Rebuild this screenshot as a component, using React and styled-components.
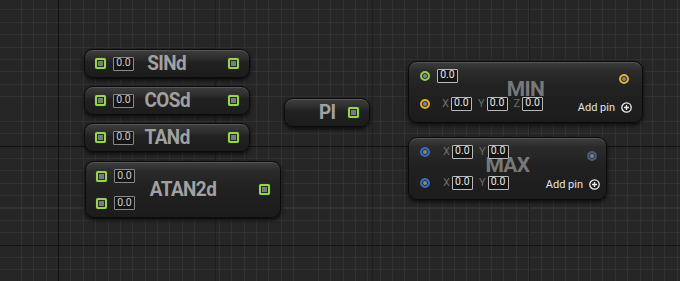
import React from "react";
import styled, { createGlobalStyle } from "styled-components";

const Global = createGlobalStyle`
  html, body { margin: 0; padding: 0; background: #262626; }
  body { font-family: Roboto, "Liberation Sans", sans-serif; }
`;

const Canvas = styled.div`
  position: relative;
  width: 680px;
  height: 281px;
  overflow: hidden;
  background-color: #262626;
  background-image:
    linear-gradient(to right, transparent 0 58px, #121212 58px 59px, transparent 59px),
    linear-gradient(to bottom, transparent 0 146px, #121212 146px 147px, transparent 147px 245px, #151515 245px 246px, transparent 246px),
    repeating-linear-gradient(to right, transparent 0 58px, #1f1f1f 58px 59px, transparent 59px 157px),
    repeating-linear-gradient(to right, transparent 0 8.5px, #313131 8.5px 9.5px, transparent 9.5px 12.375px),
    repeating-linear-gradient(to bottom, transparent 0 9.5px, #313131 9.5px 10.5px, transparent 10.5px 12.375px);
`;

const NodeBase = styled.div`
  position: absolute;
  left: ${(p) => p.$x}px;
  top: ${(p) => p.$y}px;
  width: ${(p) => p.$w}px;
  height: ${(p) => p.$h}px;
  box-sizing: border-box;
  border-radius: ${(p) => p.$r || 9}px;
  border: 1px solid #0b0b0b;
  background: linear-gradient(to bottom, #3e3e3e 0, #2b2b2b 9px, #212121 45%, #1c1c1c 100%);
  box-shadow: inset 0 1px 0 rgba(255, 255, 255, 0.13), 0 2px 4px rgba(0, 0, 0, 0.75);
`;

const SimpleNode = styled(NodeBase)`
  display: grid;
  grid-template-columns: 1fr auto 1fr;
  align-items: center;
  padding: 0 10px;
`;

const LeftGroup = styled.div`
  display: flex;
  flex-direction: column;
  gap: ${(p) => p.$gap || 0}px;
  justify-self: start;
`;

const Row = styled.div`
  display: flex;
  align-items: center;
  height: 15px;
`;

const Title = styled.div`
  font-family: Roboto, "Liberation Sans", sans-serif;
  font-weight: 700;
  font-size: 21px;
  line-height: 1;
  color: #a1a1a1;
  letter-spacing: -0.6px;
  transform: scaleX(0.9);
  white-space: nowrap;
`;

const RightSlot = styled.div`
  justify-self: end;
  display: flex;
  align-items: center;
`;

const SquarePin = styled.span`
  display: inline-block;
  width: 11px;
  height: 11px;
  box-sizing: border-box;
  border: 2px solid #92d84c;
  border-radius: 2px;
  background: #7b7b7b;
  box-shadow: inset 0 0 0 1px #2a2a2a, 0 0 1px rgba(146, 216, 76, 0.5);
  flex: none;
`;

const pinColors = {
  green: "#8ed14d",
  yellow: "#e0ad2c",
  blue: "#2f6cc4",
  steel: "#3f5f86",
};

const CirclePin = styled.span`
  display: inline-block;
  width: 10px;
  height: 10px;
  box-sizing: border-box;
  border-radius: 50%;
  border: 2px solid ${(p) => pinColors[p.$c]};
  background: #868686;
  box-shadow: inset 0 0 0 1px #2a2a2a;
  flex: none;
`;

const ValueBox = styled.span`
  display: inline-flex;
  align-items: center;
  justify-content: center;
  width: 21px;
  height: 14px;
  box-sizing: border-box;
  border: 1px solid ${(p) => (p.$bright ? "#b9b9b9" : "#8a8a8a")};
  border-radius: 1px;
  background: #141414;
  color: ${(p) => (p.$bright ? "#e8e8e8" : "#cfcfcf")};
  font-family: Roboto, "Liberation Sans", sans-serif;
  font-size: 10.5px;
  line-height: 1;
  margin-left: ${(p) => p.$ml ?? 7}px;
`;

const Axis = styled.span`
  font-family: Roboto, "Liberation Sans", sans-serif;
  font-size: 11px;
  color: #6c6c6c;
  margin-left: ${(p) => p.$ml || 6}px;
  line-height: 1;
`;

const BigNode = styled(NodeBase)`
  display: flex;
  justify-content: space-between;
  padding: 0 ${(p) => p.$pr}px 0 11px;
`;

const BigTitle = styled.div`
  position: absolute;
  left: 0;
  right: 0;
  top: 17px;
  text-align: center;
  font-family: Roboto, "Liberation Sans", sans-serif;
  font-weight: 700;
  font-size: 21px;
  line-height: 1;
  color: rgba(150, 150, 150, 0.75);
  letter-spacing: -0.6px;
  pointer-events: none;
`;

const PinColumn = styled.div`
  position: relative;
  display: flex;
  flex-direction: column;
  padding-top: ${(p) => p.$pt}px;
  gap: ${(p) => p.$gap}px;
`;

const OutColumn = styled.div`
  position: relative;
  display: flex;
  flex-direction: column;
  align-items: flex-end;
  padding-top: ${(p) => p.$pt}px;
  gap: ${(p) => p.$gap}px;
`;

const OutPinWrap = styled.div`
  height: 10px;
  margin-right: 3px;
  display: flex;
`;

const AddPin = styled.div`
  display: flex;
  align-items: center;
  gap: 6px;
  height: 12px;
  font-family: Roboto, "Liberation Sans", sans-serif;
  font-size: 11px;
  color: #e4e4e4;
`;

const PlusIcon = () => (
  <svg width="11" height="11" viewBox="0 0 11 11" fill="none">
    <circle cx="5.5" cy="5.5" r="4.7" stroke="#f0f0f0" strokeWidth="1.3" />
    <path d="M5.5 3v5M3 5.5h5" stroke="#f0f0f0" strokeWidth="1.3" />
  </svg>
);

const Simple = ({ x, y, w, title }) => (
  <SimpleNode $x={x} $y={y} $w={w} $h={29}>
    <LeftGroup>
      <Row>
        <SquarePin />
        <ValueBox>0.0</ValueBox>
      </Row>
    </LeftGroup>
    <Title>{title}</Title>
    <RightSlot>
      <SquarePin />
    </RightSlot>
  </SimpleNode>
);

export default function App() {
  return (
    <>
      <Global />
      <Canvas>
        <Simple x={84} y={49} w={166} title="SINd" />
        <Simple x={84} y={86} w={166} title="COSd" />
        <Simple x={84} y={123} w={166} title="TANd" />

        <SimpleNode $x={85} $y={161} $w={196} $h={57}>
          <LeftGroup $gap={12}>
            <Row>
              <SquarePin />
              <ValueBox>0.0</ValueBox>
            </Row>
            <Row>
              <SquarePin />
              <ValueBox>0.0</ValueBox>
            </Row>
          </LeftGroup>
          <Title>ATAN2d</Title>
          <RightSlot>
            <SquarePin />
          </RightSlot>
        </SimpleNode>

        <SimpleNode $x={284} $y={98} $w={86} $h={29}>
          <LeftGroup />
          <Title>PI</Title>
          <RightSlot>
            <SquarePin />
          </RightSlot>
        </SimpleNode>

        <BigNode $x={408} $y={61} $w={235} $h={62} $pr={10}>
          <BigTitle>MIN</BigTitle>
          <PinColumn $pt={6} $gap={13}>
            <Row>
              <CirclePin $c="green" />
              <ValueBox $bright>0.0</ValueBox>
            </Row>
            <Row>
              <CirclePin $c="yellow" />
              <Axis $ml={12}>X</Axis>
              <ValueBox $bright $ml={2}>0.0</ValueBox>
              <Axis>Y</Axis>
              <ValueBox $bright $ml={2}>0.0</ValueBox>
              <Axis>Z</Axis>
              <ValueBox $bright $ml={2}>0.0</ValueBox>
            </Row>
          </PinColumn>
          <OutColumn $pt={12} $gap={17}>
            <OutPinWrap>
              <CirclePin $c="yellow" />
            </OutPinWrap>
            <AddPin>
              Add pin
              <PlusIcon />
            </AddPin>
          </OutColumn>
        </BigNode>

        <BigNode $x={408} $y={137} $w={199} $h={63} $pr={6}>
          <BigTitle>MAX</BigTitle>
          <PinColumn $pt={6} $gap={16}>
            <Row>
              <CirclePin $c="blue" />
              <Axis $ml={13}>X</Axis>
              <ValueBox $bright $ml={2}>0.0</ValueBox>
              <Axis>Y</Axis>
              <ValueBox $bright $ml={2}>0.0</ValueBox>
            </Row>
            <Row>
              <CirclePin $c="blue" />
              <Axis $ml={13}>X</Axis>
              <ValueBox $bright $ml={2}>0.0</ValueBox>
              <Axis>Y</Axis>
              <ValueBox $bright $ml={2}>0.0</ValueBox>
            </Row>
          </PinColumn>
          <OutColumn $pt={13} $gap={17}>
            <OutPinWrap>
              <CirclePin $c="steel" />
            </OutPinWrap>
            <AddPin>
              Add pin
              <PlusIcon />
            </AddPin>
          </OutColumn>
        </BigNode>
      </Canvas>
    </>
  );
}
